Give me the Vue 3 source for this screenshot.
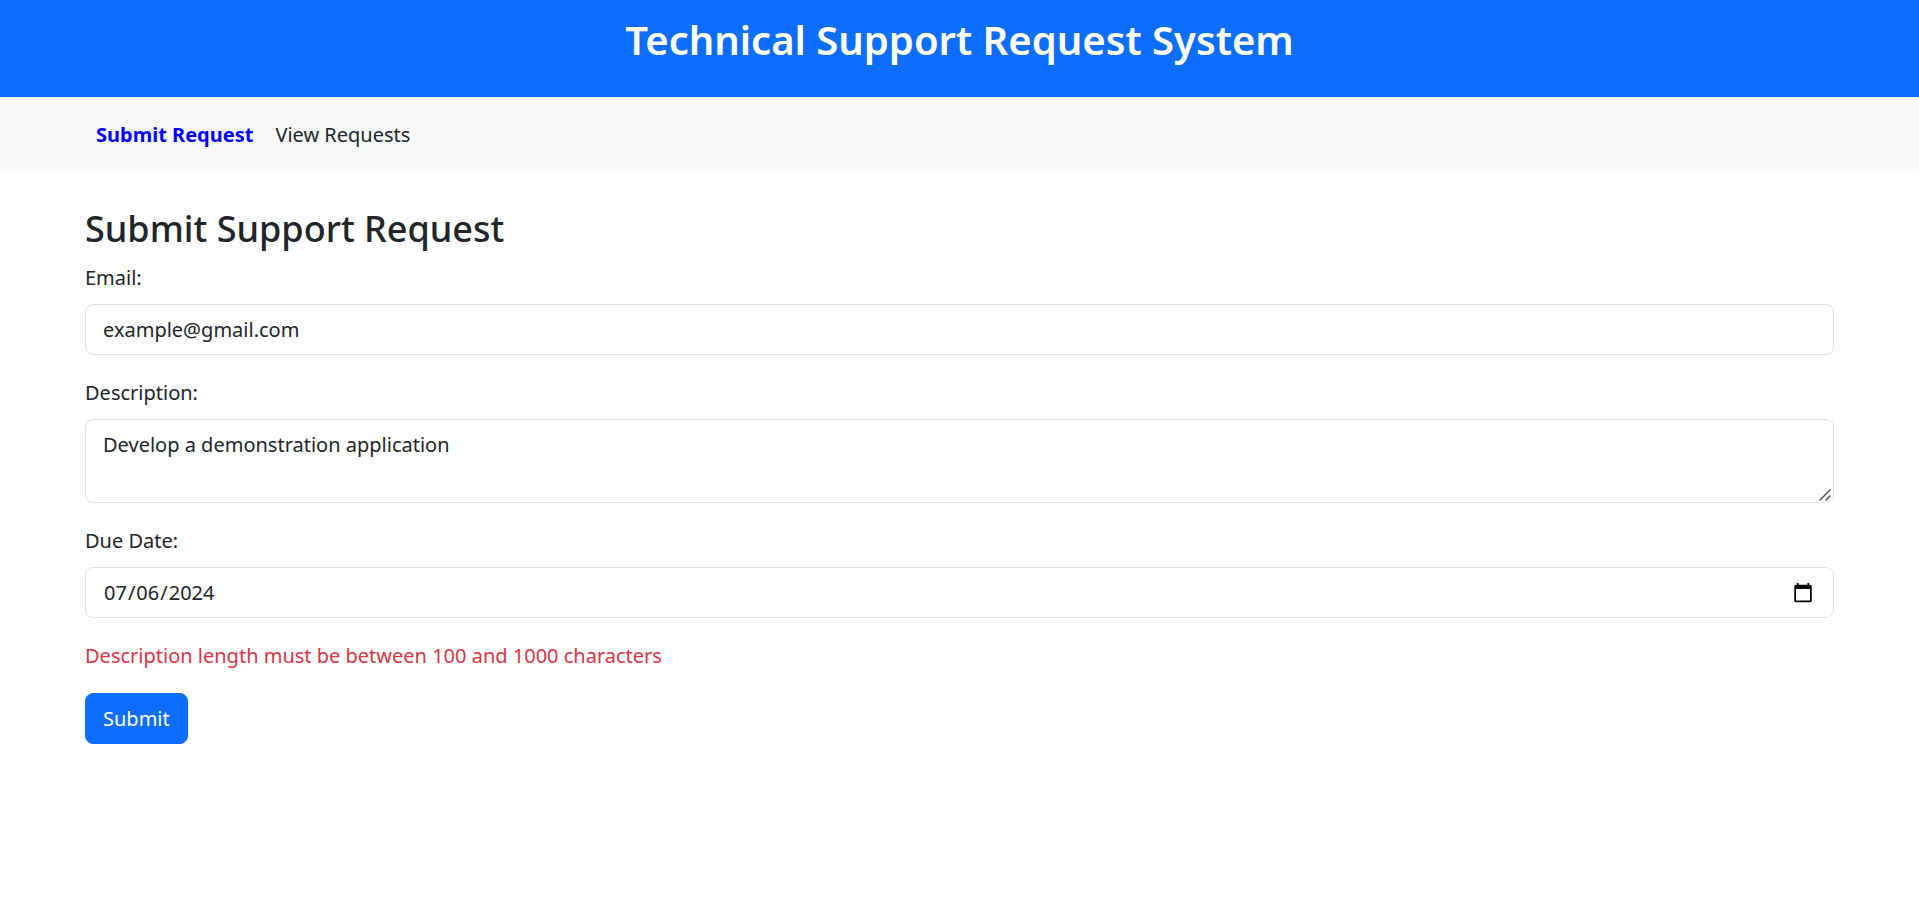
<script setup>
import { ref } from 'vue'

const email = ref('example@gmail.com')
const description = ref('Develop a demonstration application')
const dueDate = ref('2024-07-06')
const error = ref('Description length must be between 100 and 1000 characters')

function submit() {
  const length = description.value.length
  error.value =
    length < 100 || length > 1000
      ? 'Description length must be between 100 and 1000 characters'
      : ''
}
</script>

<template>
  <div class="app">
    <header class="banner">
      <h1>Technical Support Request System</h1>
    </header>
    <nav class="navbar">
      <div class="container links">
        <a href="#submit" class="link active">Submit Request</a>
        <a href="#requests" class="link">View Requests</a>
      </div>
    </nav>
    <main class="container content">
      <h2>Submit Support Request</h2>
      <form novalidate @submit.prevent="submit">
        <div class="field">
          <label for="email">Email:</label>
          <input id="email" v-model="email" class="control" type="email" />
        </div>
        <div class="field">
          <label for="description">Description:</label>
          <div class="area">
            <textarea id="description" v-model="description" class="control" rows="2"></textarea>
            <svg class="grip" viewBox="0 0 12 12" aria-hidden="true">
              <path d="M0.5 11.5 11.5 0.5M6.5 11.5l5-5" />
            </svg>
          </div>
        </div>
        <div class="field">
          <label for="due">Due Date:</label>
          <input id="due" v-model="dueDate" class="control" type="date" />
        </div>
        <p v-if="error" class="error" role="alert">{{ error }}</p>
        <button class="submit" type="submit">Submit</button>
      </form>
    </main>
  </div>
</template>

<style>
body {
  margin: 0;
  background: #fff;
}
</style>

<style scoped>
.app {
  font-family: "Noto Sans", "Open Sans", sans-serif;
  font-size: 20px;
  line-height: 33px;
  color: #212529;
}
.banner {
  padding: 14px 16px 31px;
  background: #0d6efd;
  color: #fff;
  text-align: center;
}
h1 {
  margin: 0;
  font-size: 40px;
  line-height: 52px;
  font-weight: 600;
}
.container {
  box-sizing: border-box;
  max-width: 1781px;
  margin: 0 auto;
  padding: 0 16px;
}
.navbar {
  padding: 11px 0;
  background: #f8f9fa;
}
.links {
  display: flex;
}
.link {
  padding: 10px 11px;
  color: #212529;
  text-decoration: none;
}
.active {
  color: #00f;
  font-weight: 700;
}
.content {
  padding-top: 34px;
}
h2 {
  margin: 0 0 10px;
  font-size: 36px;
  line-height: 45px;
  font-weight: 500;
}
.field {
  margin-bottom: 21px;
}
label {
  display: block;
  margin-bottom: 10px;
}
.control {
  display: block;
  box-sizing: border-box;
  width: 100%;
  margin: 0;
  padding: 8px 17px;
  border: 1px solid #dee2e6;
  border-radius: 8px;
  background: #fff;
  color: #212529;
  font: inherit;
  outline: none;
}
input.control {
  height: 51px;
}
input[type="date"].control {
  padding-top: 7px;
  padding-bottom: 7px;
}
.control::-webkit-calendar-picker-indicator {
  width: 22px;
  height: 22px;
  padding: 2px;
}
.area {
  position: relative;
}
textarea.control {
  resize: vertical;
}
textarea.control::-webkit-resizer {
  background: transparent;
}
.grip {
  position: absolute;
  right: 3px;
  bottom: 2px;
  width: 12px;
  height: 12px;
  fill: none;
  stroke: #555;
  stroke-width: 1.5;
  pointer-events: none;
}
.error {
  margin: 0 0 21px;
  color: #dc3545;
}
.submit {
  padding: 8px 17px;
  border: 1px solid #0d6efd;
  border-radius: 8px;
  background: #0d6efd;
  color: #fff;
  font: inherit;
  cursor: pointer;
}
</style>
